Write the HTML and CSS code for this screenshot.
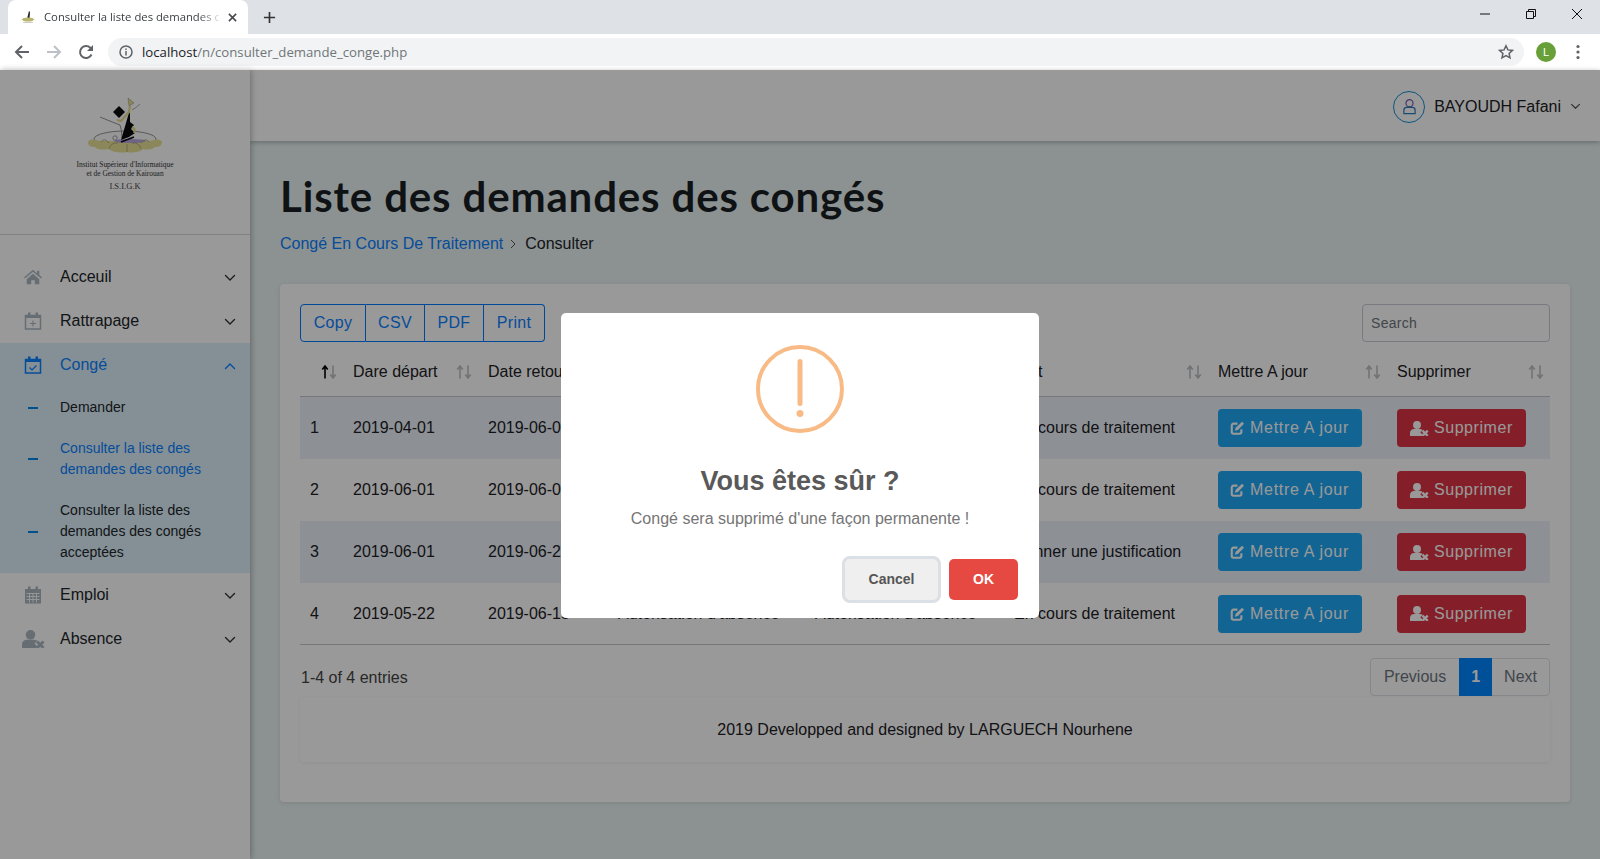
FILE: index.html
```html
<!DOCTYPE html>
<html lang="fr">
<head>
<meta charset="utf-8">
<title>Consulter la liste des demandes des congés</title>
<link rel="stylesheet" href="styles.css">
</head>
<body>
<svg class="sprite" aria-hidden="true">
  <defs>
    <symbol id="chev" viewBox="0 0 12 8"><path d="M1.5 1.5 6 6l4.5-4.5" fill="none" stroke="currentColor" stroke-width="1.4" stroke-linecap="round" stroke-linejoin="round"/></symbol>
    <symbol id="usertimes" viewBox="0 0 23 18"><circle cx="8.500" cy="4.800" r="4.800" fill="currentColor"/><path d="M0 18v-3.500c0-3 2.400-4.800 5-4.800h7c1.300 0 2.400.4 3.300 1.100L12.500 13.500 15.500 16.500 14 18z" fill="currentColor"/><path d="M15 11.500l6.500 6.500m0-6.500L15 18" fill="none" stroke="currentColor" stroke-width="2.800"/></symbol>
    <symbol id="edit" viewBox="0 0 16 16"><path d="M8.500 3H4a2 2 0 0 0-2 2v7.500a2 2 0 0 0 2 2h7a2 2 0 0 0 2-2V9.500" fill="none" stroke="currentColor" stroke-width="2.400"/><path d="M13.800 .8l2.200 2.200-7 7.200-3.400.9.900-3.400z" fill="currentColor"/></symbol>
    <symbol id="sort" viewBox="0 0 8 14"><path d="M4 13.500V1.500M1.300 4.500 4 1l2.700 3.500" fill="none" stroke="currentColor" stroke-width="1.600"/></symbol>
    <symbol id="sortd" viewBox="0 0 8 14"><path d="M4 .5v12M1.300 9.500 4 13l2.700-3.500" fill="none" stroke="currentColor" stroke-width="1.600"/></symbol>
  </defs>
</svg>

<header class="chrome">
  <div class="tabstrip">
    <div class="tab">
      <svg class="tab-fav" viewBox="0 0 16 16"><path d="M9 2l1 1-.5 7H7z" fill="#222"/><ellipse cx="8" cy="10.500" rx="6" ry="2" fill="#b9b46d"/><rect x="3" y="13" width="10" height="1" fill="#ccc"/></svg>
      <span class="tab-title">Consulter la liste des demandes c</span>
      <svg class="tab-close" viewBox="0 0 10 10"><path d="M1 1l8 8M9 1 1 9" stroke="#45474a" stroke-width="1.700" fill="none"/></svg>
    </div>
    <svg class="tab-new" viewBox="0 0 14 14"><path d="M7 1v12M1 7h12" stroke="#333" stroke-width="1.800" fill="none"/></svg>
    <div class="winctl">
      <svg viewBox="0 0 12 12"><path d="M1 6h10" stroke="#111" stroke-width="1" fill="none"/></svg>
      <svg viewBox="0 0 12 12"><path d="M3.500 3V1.500h7v7H9M1.500 3.500h7v7h-7z" stroke="#111" stroke-width="1" fill="none"/></svg>
      <svg viewBox="0 0 12 12"><path d="M1 1l10 10M11 1 1 11" stroke="#111" stroke-width="1" fill="none"/></svg>
    </div>
  </div>
  <div class="toolbar">
    <svg class="nav-ic" viewBox="0 0 16 16"><path d="M15 8H2M8 2 2 8l6 6" stroke="#5f6368" stroke-width="2" fill="none"/></svg>
    <svg class="nav-ic" viewBox="0 0 16 16"><path d="M1 8h13M8 2l6 6-6 6" stroke="#bdc1c6" stroke-width="2" fill="none"/></svg>
    <svg class="nav-ic" viewBox="0 0 16 16"><path d="M13.500 10.500A6 6 0 1 1 12.300 3.800L14.500 6" stroke="#5f6368" stroke-width="2" fill="none"/><path d="M15 1v6H9z" fill="#5f6368"/></svg>
    <div class="omnibox">
      <svg class="omni-info" viewBox="0 0 14 14"><circle cx="7" cy="7" r="6" stroke="#5f6368" stroke-width="1.500" fill="none"/><path d="M7 6v4.500M7 3.500v1.500" stroke="#5f6368" stroke-width="1.500"/></svg>
      <span class="url"><b class="url-host">localhost</b>/n/consulter_demande_conge.php</span>
      <svg class="omni-star" viewBox="0 0 16 16"><path d="M8 1.800l1.900 4.100 4.500.5-3.300 3 .9 4.400L8 11.600l-4 2.200.9-4.400-3.300-3 4.500-.5z" stroke="#5f6368" stroke-width="1.500" fill="none"/></svg>
    </div>
    <span class="avatar">L</span>
    <svg class="menu-ic" viewBox="0 0 4 16"><circle cx="2" cy="2.500" r="1.600" fill="#5f6368"/><circle cx="2" cy="8" r="1.600" fill="#5f6368"/><circle cx="2" cy="13.500" r="1.600" fill="#5f6368"/></svg>
  </div>
</header>

<div class="app">
  <aside class="sidebar">
    <div class="brand">
      <svg class="brand-mark" viewBox="0 0 80 62">
        <ellipse cx="40" cy="44" rx="31" ry="8" fill="#fbfbfb" stroke="#666" stroke-width=".7"/>
        <circle cx="30" cy="43" r="2.200" fill="none" stroke="#777" stroke-width=".7"/>
        <path d="M3 47C6 42 12 46 16 46L64 46C68 46 74 42 77 47 77 50 75 52 70 52 68 55 60 55 58 54 54 58 46 58 42 57 38 58 28 58 24 54 18 55 12 55 10 52 5 52 3 50 3 47Z" fill="#e9e196"/>
        <ellipse cx="45" cy="46" rx="16" ry="2" fill="#b9a6e0"/>
        <path d="M16 47q3-5 8 1M24 54q2-7 9-6M56 54q-2-7-9-6M64 47q-3-5-8 1M42 57v-8" fill="none" stroke="#a5a36a" stroke-width=".8"/>
        <path d="M15 22q12 5 20 8 2 5 2 13" fill="none" stroke="#888" stroke-width=".9"/>
        <path d="M28 17l6-6 6 6-6 6z" fill="#0a0a0a"/>
        <path d="M45 14l-4 14-5 17 8-3 6-4-4-4 3-4-4-3z" fill="#0a0a0a"/>
        <path d="M36 47l13-5" stroke="#0a0a0a" stroke-width="1.600"/>
        <path d="M43 3l6 5-5 3z" fill="#e4e08a" stroke="#777" stroke-width=".4"/>
        <path d="M45 11l-1 6-8 9-4-1" fill="none" stroke="#e4e08a" stroke-width="2.200"/>
        <path d="M47 15q4-2 8-6" fill="none" stroke="#777" stroke-width=".6"/>
        <path d="M47 32q4 2 2 6" fill="none" stroke="#e4e08a" stroke-width="2"/>
      </svg>
      <p class="brand-line">Institut Supérieur d'Informatique</p>
      <p class="brand-line">et de Gestion de Kairouan</p>
      <p class="brand-code">I.S.I.G.K</p>
    </div>
    <nav class="nav">
      <a class="nav-item">
        <svg class="nav-icon" viewBox="0 0 20 18"><path d="M10 1 0 9.500l1 1.200L10 3.200l9 7.500 1-1.200-3-2.600V2h-2.500v3.100z" fill="currentColor"/><path d="M3 11.500 10 5.500l7 6V17h-5v-4.500H8V17H3z" fill="currentColor"/></svg>
        <span class="nav-label">Acceuil</span>
        <svg class="nav-chev"><use href="#chev"/></svg>
      </a>
      <a class="nav-item">
        <svg class="nav-icon" viewBox="0 0 18 18"><path d="M1.500 3.500h15v13.500h-15z" fill="none" stroke="currentColor" stroke-width="1.500"/><path d="M1 3h16v3H1zM4 .5h2.500V4H4zM11.500 .5H14V4h-2.500z" fill="currentColor"/><path d="M9 8.500v6M6 11.500h6" stroke="currentColor" stroke-width="1.100"/></svg>
        <span class="nav-label">Rattrapage</span>
        <svg class="nav-chev"><use href="#chev"/></svg>
      </a>
      <div class="nav-group">
        <a class="nav-item nav-item-open">
          <svg class="nav-icon" viewBox="0 0 18 18"><path d="M1.500 3.500h15v13.500h-15z" fill="none" stroke="currentColor" stroke-width="1.500"/><path d="M1 3h16v3H1zM4 .5h2.500V4H4zM11.500 .5H14V4h-2.500z" fill="currentColor"/><path d="M5.500 11.500l2.500 2.500 4.500-4.500" fill="none" stroke="currentColor" stroke-width="1.200"/></svg>
          <span class="nav-label">Congé</span>
          <svg class="nav-chev nav-chev-up"><use href="#chev"/></svg>
        </a>
        <a class="sub-item"><i class="dash"></i><span>Demander</span></a>
        <a class="sub-item sub-active"><i class="dash"></i><span>Consulter la liste des demandes des congés</span></a>
        <a class="sub-item"><i class="dash"></i><span>Consulter la liste des demandes des congés acceptées</span></a>
      </div>
      <a class="nav-item">
        <svg class="nav-icon" viewBox="0 0 18 18"><path d="M1 3h16v14.500H1z" fill="currentColor"/><path d="M4 .5h2.500V4H4zM11.500 .5H14V4h-2.500z" fill="currentColor"/><path d="M2.500 7.500h13M2.500 10.500h13M2.500 13.500h13M5.500 7v9.500M9 7v9.500M12.500 7v9.500" stroke="#fff" stroke-width=".9" fill="none"/></svg>
        <span class="nav-label">Emploi</span>
        <svg class="nav-chev"><use href="#chev"/></svg>
      </a>
      <a class="nav-item">
        <svg class="nav-icon nav-icon-wide"><use href="#usertimes"/></svg>
        <span class="nav-label">Absence</span>
        <svg class="nav-chev"><use href="#chev"/></svg>
      </a>
    </nav>
  </aside>

  <div class="main">
    <div class="topbar">
      <span class="user-ring">
        <svg viewBox="0 0 16 18"><circle cx="8" cy="5.500" r="3.800" fill="none" stroke="#7a5fb0" stroke-width="1.300"/><path d="M2 16.500v-3.500c0-2 1.500-3 3-3h6c1.500 0 3 1 3 3v3.500z" fill="none" stroke="#2a7fc0" stroke-width="1.300"/></svg>
      </span>
      <span class="user-name">BAYOUDH Fafani</span>
      <svg class="user-chev"><use href="#chev"/></svg>
    </div>
    <main class="content">
      <h1 class="page-title">Liste des demandes des congés</h1>
      <div class="crumbs">
        <a class="crumb-link">Congé En Cours De Traitement</a>
        <svg class="crumb-sep" viewBox="0 0 6 10"><path d="M1 1l4 4-4 4" stroke="#555" stroke-width="1" fill="none"/></svg>
        <span>Consulter</span>
      </div>
      <section class="card">
        <div class="tools">
          <div class="btn-group">
            <button class="tool-btn">Copy</button><button class="tool-btn">CSV</button><button class="tool-btn">PDF</button><button class="tool-btn">Print</button>
          </div>
          <input class="search" placeholder="Search">
        </div>
        <table class="grid">
          <colgroup>
            <col class="c1"><col class="c2"><col class="c3"><col class="c4"><col class="c5"><col class="c6"><col class="c7"><col class="c8">
          </colgroup>
          <thead>
            <tr>
              <th><div class="th-in"><span></span><span class="arrows arrows-on"><svg><use href="#sort"/></svg><svg><use href="#sortd"/></svg></span></div></th>
              <th><div class="th-in"><span>Dare départ</span><span class="arrows"><svg><use href="#sort"/></svg><svg><use href="#sortd"/></svg></span></div></th>
              <th><div class="th-in"><span>Date retour</span><span class="arrows"><svg><use href="#sort"/></svg><svg><use href="#sortd"/></svg></span></div></th>
              <th><div class="th-in"><span>Type</span><span class="arrows"><svg><use href="#sort"/></svg><svg><use href="#sortd"/></svg></span></div></th>
              <th><div class="th-in"><span>Motif</span><span class="arrows"><svg><use href="#sort"/></svg><svg><use href="#sortd"/></svg></span></div></th>
              <th><div class="th-in"><span>Etat</span><span class="arrows"><svg><use href="#sort"/></svg><svg><use href="#sortd"/></svg></span></div></th>
              <th><div class="th-in"><span>Mettre A jour</span><span class="arrows"><svg><use href="#sort"/></svg><svg><use href="#sortd"/></svg></span></div></th>
              <th><div class="th-in"><span>Supprimer</span><span class="arrows"><svg><use href="#sort"/></svg><svg><use href="#sortd"/></svg></span></div></th>
            </tr>
          </thead>
          <tbody>
            <tr class="odd">
              <td>1</td><td>2019-04-01</td><td>2019-06-01</td><td>Autorisation d'absence</td><td>Autorisation d'absence</td><td>En cours de traitement</td>
              <td><a class="act act-edit"><svg><use href="#edit"/></svg>Mettre A jour</a></td>
              <td><a class="act act-del"><svg><use href="#usertimes"/></svg>Supprimer</a></td>
            </tr>
            <tr>
              <td>2</td><td>2019-06-01</td><td>2019-06-03</td><td>Autorisation d'absence</td><td>Autorisation d'absence</td><td>En cours de traitement</td>
              <td><a class="act act-edit"><svg><use href="#edit"/></svg>Mettre A jour</a></td>
              <td><a class="act act-del"><svg><use href="#usertimes"/></svg>Supprimer</a></td>
            </tr>
            <tr class="odd">
              <td>3</td><td>2019-06-01</td><td>2019-06-25</td><td>Autorisation d'absence</td><td>Autorisation d'absence</td><td>Donner une justification</td>
              <td><a class="act act-edit"><svg><use href="#edit"/></svg>Mettre A jour</a></td>
              <td><a class="act act-del"><svg><use href="#usertimes"/></svg>Supprimer</a></td>
            </tr>
            <tr>
              <td>4</td><td>2019-05-22</td><td>2019-06-15</td><td>Autorisation d'absence</td><td>Autorisation d'absence</td><td>En cours de traitement</td>
              <td><a class="act act-edit"><svg><use href="#edit"/></svg>Mettre A jour</a></td>
              <td><a class="act act-del"><svg><use href="#usertimes"/></svg>Supprimer</a></td>
            </tr>
          </tbody>
        </table>
        <div class="table-foot">
          <span class="entries">1-4 of 4 entries</span>
          <div class="pager"><a class="pg">Previous</a><a class="pg pg-on">1</a><a class="pg">Next</a></div>
        </div>
        <footer class="credits">2019 Developped and designed by LARGUECH Nourhene</footer>
      </section>
    </main>
  </div>

  <div class="overlay">
    <div class="modal" role="dialog">
      <svg class="warn" viewBox="0 0 88 88"><circle cx="44" cy="44" r="42" fill="none" stroke="#f8bb86" stroke-width="4"/><rect x="41.500" y="14" width="5" height="47" rx="2.500" fill="#f8bb86"/><circle cx="44" cy="68.500" r="3.500" fill="#f8bb86"/></svg>
      <h2 class="modal-title">Vous êtes sûr ?</h2>
      <p class="modal-text">Congé sera supprimé d'une façon permanente !</p>
      <div class="modal-actions">
        <button class="m-btn m-cancel">Cancel</button>
        <button class="m-btn m-ok">OK</button>
      </div>
    </div>
  </div>
</div>
</body>
</html>
```
FILE: styles.css
```css
* { box-sizing: border-box; }
html, body { margin: 0; height: 859px; overflow: hidden; }
body {
  font-family: "Liberation Sans", Arial, sans-serif;
  font-size: 16px;
  color: #212529;
  display: flex;
  flex-direction: column;
  background: #e9f2f3;
}
.sprite { display: none; }

/* Browser chrome */
.chrome { height: 70px; flex: none; background: #fff; }
.tabstrip { height: 34px; background: #dee1e6; display: flex; align-items: flex-end; padding-left: 8px; }
.tab {
  width: 240px; height: 34px; background: #fff; border-radius: 8px 8px 0 0;
  display: flex; align-items: center; padding: 0 10px 0 12px;
}
.tab-fav { width: 16px; height: 16px; flex: none; margin-right: 8px; }
.tab-title {
  flex: 1; font-family: "Open Sans", "Liberation Sans", sans-serif; font-size: 11.300px; color: #3c4043;
  white-space: nowrap; min-width: 0; padding-bottom: 1px;
  -webkit-mask-image: linear-gradient(90deg, #000 88%, rgba(0, 0, 0, .15));
  mask-image: linear-gradient(90deg, #000 88%, rgba(0, 0, 0, .15));
}
.tab-close { width: 9px; height: 9px; flex: none; margin-left: 9px; margin-right: 1px; }
.tab-new { width: 13px; height: 13px; margin: 0 0 10px 15px; flex: none; }
.winctl { margin-left: auto; display: flex; gap: 34px; padding: 0 17px 14px 0; align-self: flex-end; }
.winctl svg { width: 12px; height: 12px; }
.toolbar { height: 36px; display: flex; align-items: center; padding: 0 16px 0 14px; }
.nav-ic { width: 16px; height: 16px; margin-right: 16px; flex: none; }
.omnibox {
  width: 1416px; margin-left: -2px; height: 28px; border-radius: 14px; background: #f1f3f4;
  display: flex; align-items: center; padding: 0 10px 0 11px;
}
.omni-info { width: 14px; height: 14px; flex: none; margin-right: 9px; }
.url { font-family: "Open Sans", "Liberation Sans", sans-serif; font-size: 13.200px; color: #70757a; flex: 1; }
.url-host { font-weight: 400; color: #202124; }
.omni-star { width: 16px; height: 16px; flex: none; }
.avatar {
  width: 20px; height: 20px; border-radius: 50%; background: #689f38; color: #fff;
  font-size: 11px; display: flex; align-items: center; justify-content: center; margin-left: 12px; flex: none;
}
.menu-ic { width: 4px; height: 16px; margin-left: 20px; flex: none; }

/* App frame */
.app { position: relative; flex: 1; min-height: 0; display: flex; }
.sidebar {
  width: 250px; flex: none; background: #fff; position: relative; z-index: 1;
  box-shadow: 1px 0 6px rgba(0, 0, 0, .3);
}
.brand {
  height: 165px; padding-top: 25px; border-bottom: 1px solid #d8d8d8;
  display: flex; flex-direction: column; align-items: center;
}
.brand-mark { width: 80px; height: 62px; flex: none; margin-bottom: 3px; }
.brand-line { margin: 0; font-family: "Liberation Serif", serif; font-size: 7.400px; line-height: 9px; color: #333; white-space: nowrap; }
.brand-code { margin: 3px 0 0; font-family: "Liberation Serif", serif; font-size: 8.500px; line-height: 11px; color: #444; }
.nav { padding-top: 20px; }
.nav-item { height: 44px; display: flex; align-items: center; padding: 0 14px 0 24px; color: #212529; }
.nav-icon { width: 18px; height: 18px; color: #aab7c1; flex: none; }
.nav-icon-wide { width: 23px; height: 18px; margin-left: -2px; margin-right: -3px; }
.nav-label { margin-left: 18px; flex: 1; }
.nav-chev { width: 12px; height: 8px; color: #333; flex: none; margin-top: 2px; }
.nav-chev-up { transform: rotate(180deg); color: #0a80ff; }
.nav-group { background: #dcf0fb; }
.nav-item-open { color: #0a80ff; }
.nav-item-open .nav-icon { color: #0a80ff; }
.sub-item {
  display: flex; align-items: center; padding: 10px 20px 10px 28px;
  font-size: 14px; line-height: 21px; color: #212529;
}
.sub-active { color: #0a80ff; }
.dash { width: 10px; height: 2px; background: #0085e8; flex: none; margin-right: 22px; }

/* Main column */
.main { flex: 1; min-width: 0; display: flex; flex-direction: column; }
.topbar {
  height: 71px; flex: none; background: #fff; box-shadow: 0 1px 5px rgba(0, 0, 0, .3);
  display: flex; align-items: center; justify-content: flex-end; padding: 2px 19px 0 0; position: relative;
}
.user-ring {
  width: 32px; height: 32px; border-radius: 50%; border: 1px solid #1390d8;
  display: flex; align-items: center; justify-content: center;
}
.user-ring svg { width: 15px; height: 17px; }
.user-name { margin-left: 9px; color: #1d2125; }
.user-chev { width: 11px; height: 7px; margin-left: 9px; color: #555; }
.content { padding: 30px 30px 0; }
.page-title {
  margin: 0; height: 50px; line-height: 50px; font-family: "Comic Sans MS", "Lato", sans-serif;
  font-size: 42px; font-weight: 700; letter-spacing: .85px; color: #1a1f24; white-space: nowrap;
}
.crumbs { display: flex; align-items: center; height: 24px; margin: 11px 0 28px; }
.crumb-link { color: #0a80ff; }
.crumb-sep { width: 6px; height: 10px; margin: 0 9px 0 7px; }

/* Card and table */
.card { background: #fff; border-radius: 4px; padding: 20px 20px 40px; box-shadow: 0 1px 4px rgba(0, 0, 0, .1); height: 518px; }
.tools { display: flex; justify-content: space-between; height: 38px; }
.btn-group { display: flex; }
.tool-btn {
  height: 38px; background: transparent; border: 1px solid #007bff; border-left-width: 0;
  font: 16px "Liberation Sans", Arial, sans-serif; letter-spacing: .3px; color: #0a80ff; padding: 0;
  width: 59px;
}
.tool-btn:first-child { border-left-width: 1px; width: 66px; border-radius: 4px 0 0 4px; }
.tool-btn:last-child { width: 61px; border-radius: 0 4px 4px 0; }
.search {
  width: 188px; height: 38px; border: 1px solid #c9ccd4; border-radius: 4px; padding: 0 8px;
  font: 14px "Liberation Sans", Arial, sans-serif; letter-spacing: .3px; background: transparent;
}
.search::placeholder { color: #6c757d; opacity: 1; }
.grid { width: 1250px; table-layout: fixed; border-collapse: separate; border-spacing: 0; margin-top: 8px; }
.c1 { width: 43px; } .c2 { width: 135px; } .c3 { width: 130px; } .c4 { width: 197px; }
.c5 { width: 199px; } .c6 { width: 204px; } .c7 { width: 179px; } .c8 { width: 163px; }
.grid th { height: 47px; padding: 0 6px 3px 10px; font-weight: 400; text-align: left; border-bottom: 1px solid #c4c6c8; color: #1d2125; }
.th-in { display: flex; justify-content: space-between; align-items: center; }
.arrows { display: flex; color: #bcbfc2; }
.arrows svg { width: 8px; height: 14px; }
.arrows-on svg:first-child { color: #000; }
.grid td { height: 62px; padding: 0 10px; white-space: nowrap; color: #1d2125; }
.grid .odd td { background: #ebf2fa; }
.grid tbody tr:last-child td { border-bottom: 1px solid #c4c6c8; height: 62px; }
.act {
  display: inline-flex; align-items: center; height: 38px; border-radius: 4px; padding: 0 13px;
  color: #fff;
}
.act svg { width: 14px; height: 14px; margin-right: 6px; flex: none; }
.act-edit { background: #1ea7f6; width: 144px; letter-spacing: .7px; padding-left: 12px; }
.act-del { background: #dc3545; width: 129px; letter-spacing: .55px; }
.act-del svg { width: 19px; height: 15px; margin-right: 5px; }
.table-foot { display: flex; justify-content: space-between; align-items: center; margin-top: 13px; height: 38px; }
.entries { color: #444; padding: 2px 0 0 1px; }
.pager { display: flex; border: 1px solid #dee2e6; border-radius: 4px; height: 38px; }
.pg { display: flex; align-items: center; padding: 0 12px; color: #6c757d; }
.pg:first-child { padding: 0 13px; }
.pg-on { background: #0085ff; color: #fff; margin: -1px 0; font-weight: 700; }
.credits {
  height: 65px; margin-top: 1px; display: flex; align-items: center; justify-content: center;
  background: #fff; border-radius: 4px; box-shadow: 0 1px 4px rgba(0, 0, 0, .06); color: #1d2125;
}

/* Modal */
.overlay {
  position: absolute; inset: 0; z-index: 5; background: rgba(0, 0, 0, .4);
  display: flex; justify-content: center; padding-top: 243px;
}
.modal {
  width: 478px; height: 305px; background: #fff; border-radius: 5px;
  display: flex; flex-direction: column; align-items: center; padding-top: 32px;
}
.warn { width: 88px; height: 88px; flex: none; }
.modal-title { margin: 31px 0 0; font-size: 27px; line-height: 34px; font-weight: 700; color: #595959; }
.modal-text { margin: 10px 0 0; font-size: 16px; line-height: 22px; color: #757575; }
.modal-actions { align-self: flex-end; display: flex; align-items: center; gap: 8px; margin: 29px 21px 0 0; }
.m-btn { height: 41px; border: 0; border-radius: 5px; font: 700 14px "Liberation Sans", Arial, sans-serif; padding: 0 0 2px; }
.m-cancel { width: 93px; background: #efefef; color: #555; box-shadow: 0 0 0 3px #dbe0e6; margin: 0 3px 0 3px; }
.m-ok { width: 69px; background: #e64942; color: #fff; }
```
